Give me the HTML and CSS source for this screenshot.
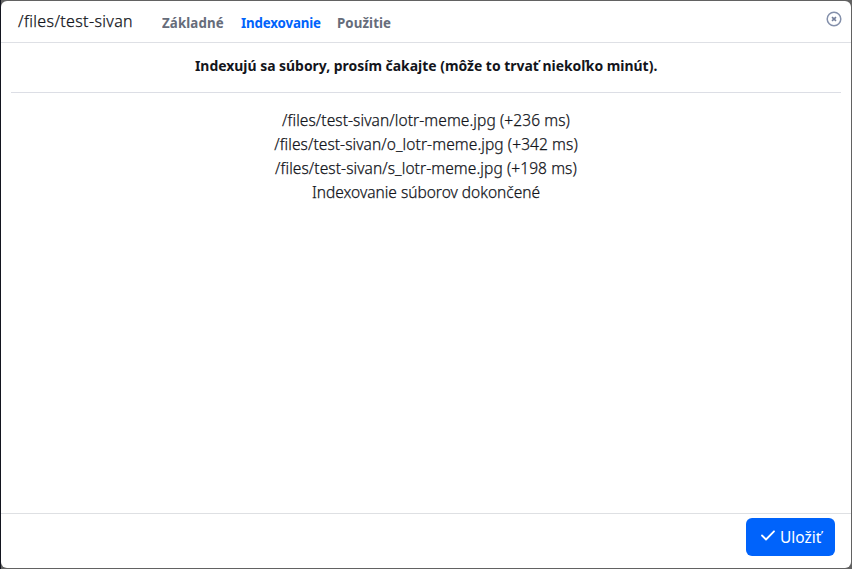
FILE: index.html
```html
<!DOCTYPE html>
<html lang="sk">
<head>
<meta charset="utf-8">
<title>Indexovanie</title>
<link rel="stylesheet" href="styles.css">
</head>
<body>
<div class="modal">
  <header class="header">
    <h1 class="title">/files/test-sivan</h1>
    <nav class="tabs">
      <a class="tab tab-basic">Základné</a>
      <a class="tab tab-active">Indexovanie</a>
      <a class="tab tab-usage">Použitie</a>
    </nav>
    <svg class="close" viewBox="0 0 16 16" aria-hidden="true"><circle cx="8" cy="8" r="6.8"/><path d="M6 6.2 10 9.8M10 6.2 6 9.8"/></svg>
  </header>
  <main class="content">
    <p class="notice"><span>Indexujú sa súbory, prosím čakajte (môže to trvať niekoľko minút).</span></p>
    <div class="log">
      <p>/files/test-sivan/lotr-meme.jpg (+236 ms)</p>
      <p>/files/test-sivan/o_lotr-meme.jpg (+342 ms)</p>
      <p>/files/test-sivan/s_lotr-meme.jpg (+198 ms)</p>
      <p class="done">Indexovanie súborov dokončené</p>
    </div>
  </main>
  <footer class="footer">
    <button class="save"><svg viewBox="0 0 14 11" aria-hidden="true"><path d="M1 5.5 5 9.5 13 1.3"/></svg><span>Uložiť</span></button>
  </footer>
</div>
</body>
</html>
```
FILE: styles.css
```css
* { box-sizing: border-box; }
body {
  margin: 0;
  height: 569px;
  padding: 1px;
  background: linear-gradient(90deg, #13151f 1px, #626262 1px);
  font-family: "Noto Sans", "Open Sans", sans-serif;
  font-size: 15.5px;
  color: #13151b;
  overflow: hidden;
}
p, h1 { margin: 0; }
.modal {
  display: flex;
  flex-direction: column;
  width: 850px;
  height: 567px;
  background: #fff;
  border-radius: 6px;
}
.header {
  display: flex;
  height: 42px;
  padding: 0 9px 0 16px;
  border-bottom: 1px solid #dee0e5;
}
.title {
  width: 145px;
  padding-left: 1px;
  font-size: 16px;
  font-weight: 300;
  letter-spacing: 0.35px;
  line-height: 40px;
  white-space: nowrap;
  -webkit-text-stroke: 0.25px currentColor;
}
.tabs { display: flex; flex: 1; gap: 16px; }
.tab {
  color: #666c7a;
  font-size: 14px;
  font-weight: 700;
  line-height: 43px;
  white-space: nowrap;
  transform: scaleX(0.95);
  transform-origin: left;
}
.tab-basic { width: 63px; letter-spacing: 0.12px; }
.tab-active { width: 80px; color: #0063fb; letter-spacing: -0.15px; }
.tab-usage { letter-spacing: 0.08px; }
.close { width: 16px; height: 16px; margin-top: 10px; }
.close circle { fill: none; stroke: #8490ab; stroke-width: 1.5; }
.close path { fill: none; stroke: #75809c; stroke-width: 1.7; }
.content { flex: 1; padding: 0 10px; text-align: center; }
.notice {
  height: 50px;
  border-bottom: 1px solid #dcdee5;
  font-size: 15px;
  font-weight: 700;
  line-height: 46px;
}
.notice span { display: inline-block; transform: translateY(-1px) scaleX(0.928); }
.log {
  padding-top: 15px;
  font-weight: 300;
  letter-spacing: 0.09px;
  line-height: 24px;
  -webkit-text-stroke: 0.25px currentColor;
}
.done { letter-spacing: 0; }
.footer {
  display: flex;
  justify-content: flex-end;
  height: 55px;
  padding: 4px 16px 0 0;
  border-top: 1px solid #dee0e3;
}
.save {
  display: flex;
  align-items: center;
  gap: 5px;
  width: 89px;
  height: 38px;
  padding: 0 0 0 15px;
  border: 0;
  border-radius: 6px;
  background: #0063fb;
  color: #fff;
  font: inherit;
  white-space: nowrap;
}
.save svg { width: 14px; height: 11px; margin-bottom: 3px; }
.save path { fill: none; stroke: #fff; stroke-width: 1.8; stroke-linecap: round; stroke-linejoin: round; }
```
